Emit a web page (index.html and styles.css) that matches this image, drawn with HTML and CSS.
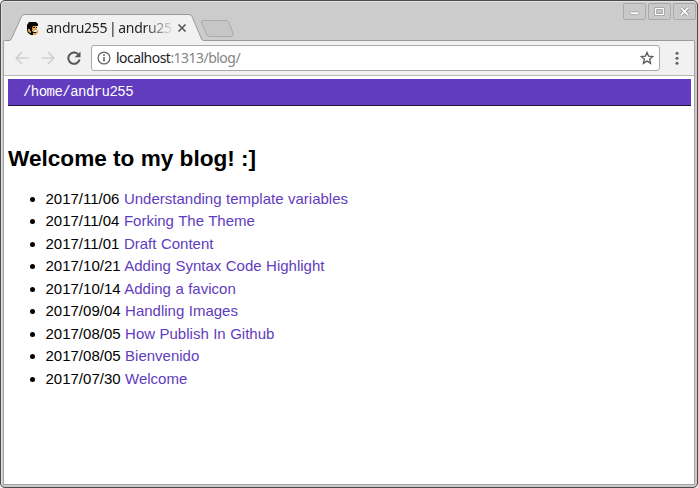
FILE: index.html
```html
<!DOCTYPE html>
<html lang="en">
<head>
<meta charset="utf-8">
<title>andru255 | andru255</title>
<link rel="stylesheet" href="styles.css">
</head>
<body>
<div class="window">
  <header class="titlebar">
    <svg class="tab-shape" width="698" height="42" viewBox="0 0 698 42" fill="none">
      <path d="M3 42V41.500Q4 40.500 6 40.500H9Q10.500 40.500 11.300 39L21.500 16.500Q22.500 14.500 24.500 14.500H189Q191 14.500 192 16.500L201.500 39Q202.300 40.500 204 40.500H693Q694.500 40.500 694.500 42Z" fill="#f1f1f1" stroke="#999"/>
      <path d="M203 20.500H226Q228 20.500 229 22.500L233 33Q233.800 36 231.500 36.500H210Q207.500 36.500 206.500 34L201.500 23Q200.800 20.500 203 20.500Z" fill="#c6c6c6" stroke="#aaa"/>
    </svg>
    <div class="tab">
      <svg class="favicon" width="12" height="13" viewBox="0 0 12 13">
        <path d="M2 0H9L11 2V4H7L6 6L5 9L7 10H10V11L8 13H4L1 11L0 8V3Z" fill="#090706"/>
        <path d="M6 4H10V8H8V9H6V7H5V6ZM1 7H3V9H4V11H3L1 9ZM10 8H11V11L8 13H6V11H9Z" fill="#eda64a"/>
        <path d="M6 5H8V6H6ZM9 5H10V6H9Z" fill="#21150c"/>
      </svg>
      <span class="tab-title">andru255 | andru25</span>
      <svg class="close" width="10" height="10" viewBox="0 0 10 10"><path d="M1.500 1.500L8.500 8.500M8.500 1.500L1.500 8.500" stroke="#5a5a5a" stroke-width="1.700"/></svg>
    </div>
    <div class="controls">
      <svg class="control" viewBox="0 0 22 17"><rect x="6" y="9" width="10" height="3" rx="1" fill="#fff" stroke="#999" stroke-width=".8"/></svg>
      <svg class="control" viewBox="0 0 22 17"><rect x="6.500" y="5" width="9" height="7" rx="1" fill="none" stroke="#929292" stroke-width="3"/><rect x="6.500" y="5" width="9" height="7" rx="1" fill="#bbb" stroke="#fff" stroke-width="1.500"/><rect x="8" y="6.500" width="6" height="4" fill="#c8c8c8" stroke="#999" stroke-width=".7"/></svg>
      <svg class="control" viewBox="0 0 22 17"><path d="M7 4.500L15 12.500M15 4.500L7 12.500" stroke="#959595" stroke-width="3.800"/><path d="M7 4.500L15 12.500M15 4.500L7 12.500" stroke="#fff" stroke-width="2"/></svg>
    </div>
  </header>
  <nav class="toolbar">
    <svg class="nav-icon" width="14" height="14" viewBox="0 0 14 14"><path d="M13.500 7H1.500M7 1L1.200 7L7 13" fill="none" stroke="#d0d0d0" stroke-width="1.700"/></svg>
    <svg class="nav-icon" width="14" height="14" viewBox="0 0 14 14"><path d="M.5 7H12.500M7 1L12.800 7L7 13" fill="none" stroke="#d0d0d0" stroke-width="1.700"/></svg>
    <svg class="reload" width="14" height="14" viewBox="0 0 14 14"><path d="M12.600 8.500A5.700 5.700 0 1 1 11 3" fill="none" stroke="#555" stroke-width="2"/><path d="M13.500 .5V6.300H7.700Z" fill="#555"/></svg>
    <div class="address">
      <svg class="info" width="14" height="14" viewBox="0 0 14 14"><circle cx="7" cy="7" r="5.900" fill="none" stroke="#666" stroke-width="1.300"/><path d="M7 6V10.500M7 3.400V5" stroke="#666" stroke-width="1.600"/></svg>
      <span class="url">localhost<span class="path">:1313/blog/</span></span>
      <svg class="star" width="14" height="14" viewBox="0 0 14 14"><path d="M7 1.400L8.600 5.200L12.800 5.500L9.600 8.200L10.600 12.300L7 10.100L3.400 12.300L4.400 8.200L1.200 5.500L5.400 5.200Z" fill="none" stroke="#5c5c5c" stroke-width="1.350"/></svg>
    </div>
    <svg class="menu" width="4" height="14" viewBox="0 0 4 14" fill="#626262"><circle cx="2" cy="2.300" r="1.500"/><circle cx="2" cy="7.300" r="1.500"/><circle cx="2" cy="12.300" r="1.500"/></svg>
  </nav>
  <main class="page">
    <div class="site-bar">/home/andru255</div>
    <h1>Welcome to my blog! :]</h1>
    <ul>
      <li>2017/11/06 <a>Understanding template variables</a></li>
      <li>2017/11/04 <a>Forking The Theme</a></li>
      <li>2017/11/01 <a>Draft Content</a></li>
      <li>2017/10/21 <a>Adding Syntax Code Highlight</a></li>
      <li>2017/10/14 <a>Adding a favicon</a></li>
      <li>2017/09/04 <a>Handling Images</a></li>
      <li>2017/08/05 <a>How Publish In Github</a></li>
      <li>2017/08/05 <a>Bienvenido</a></li>
      <li>2017/07/30 <a>Welcome</a></li>
    </ul>
  </main>
</div>
</body>
</html>
```
FILE: styles.css
```css
* { box-sizing: border-box; }
body { margin: 0; background: #eee; overflow: hidden; }
svg { display: block; flex: none; }

.window {
  position: relative;
  width: 698px;
  height: 488px;
  display: flex;
  flex-direction: column;
  padding: 0 3px 3px;
  background: #ccc;
  border: 1px solid #4b494b;
  border-radius: 5px;
  box-shadow: inset 1px 1px #e2e2e2;
}

.titlebar {
  height: 40px;
  flex: none;
  display: flex;
  justify-content: space-between;
}
.tab-shape { position: absolute; left: -1px; top: -1px; }
.tab {
  position: relative;
  display: flex;
  align-items: center;
  height: 26px;
  margin: 14px 0 0 23px;
}
.favicon { margin-right: 7px; }
.tab-title {
  width: 125px;
  overflow: hidden;
  white-space: nowrap;
  font: 14px/20px "Noto Sans", sans-serif;
  letter-spacing: -0.3px;
  word-spacing: -1.5px;
  color: #222;
  -webkit-mask-image: linear-gradient(90deg, #000 98px, transparent 129px);
  mask-image: linear-gradient(90deg, #000 98px, transparent 129px);
}
.close { margin-left: 6px; }
.controls {
  position: relative;
  display: flex;
  gap: 2px;
  padding-top: 2px;
  margin-right: -2px;
}
.control {
  width: 23px;
  height: 17px;
  border: 1px solid #aaa;
  border-radius: 2px;
  background: #c9c9c9;
}

.toolbar {
  position: relative;
  height: 35px;
  flex: none;
  display: flex;
  align-items: center;
  padding: 0 15px 0 11px;
  background: #f1f1f1;
  border-bottom: 1px solid #b8b8b8;
  box-shadow: -1px 0 #a5a3a3, 1px 0 #a5a3a3;
}
.nav-icon { margin-right: 12px; }
.reload { margin-right: 10px; }
.address {
  display: flex;
  align-items: center;
  width: 569px;
  height: 26px;
  padding: 0 5px;
  background: #fff;
  border: 1px solid #aaa;
  border-radius: 3px;
}
.url {
  flex: 1;
  margin-left: 5px;
  white-space: nowrap;
  font: 14px/20px "Noto Sans", sans-serif;
  letter-spacing: -0.53px;
  color: #222;
}
.path { color: #858585; }
.menu { margin-left: auto; }

.page {
  position: relative;
  flex: 1;
  padding: 3px 3.500px 0 4px;
  background: #fff;
  box-shadow: 0 0 0 1px #a5a3a3;
  clip-path: inset(0 -1px -1px -1px);
  font: 15px/22.5px "Liberation Sans", Arial, sans-serif;
  color: #000;
}
.site-bar {
  height: 27px;
  padding-left: 15px;
  background: #613cbe;
  border-bottom: 1px solid #201535;
  font: 14px/26px "Liberation Mono", monospace;
  letter-spacing: -0.54px;
  color: #fff;
}
h1 {
  margin: 36px 0 13px;
  font-size: 22.600px;
  line-height: 33px;
}
ul { margin: 0; padding-left: 37.500px; }
li { line-height: 22.450px; word-spacing: .3px; }
a { color: #613cbe; }
```
